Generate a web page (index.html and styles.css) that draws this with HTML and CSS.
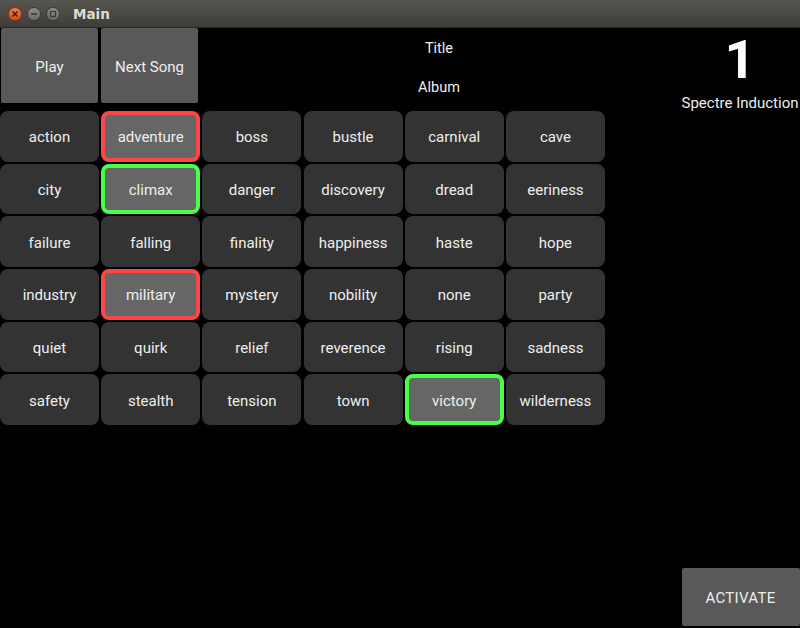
FILE: index.html
```html
<!DOCTYPE html>
<html>
<head>
<meta charset="utf-8">
<link rel="stylesheet" href="styles.css">
</head>
<body>
<div class="window">
  <div class="titlebar">
    <div class="wbtns">
      <span class="wb close"><svg width="10" height="10" viewBox="0 0 10 10"><path d="M2.5 2.5L7.5 7.5M7.5 2.5L2.5 7.5" stroke="#3a1a10" stroke-width="1.4"/></svg></span>
      <span class="wb"><svg width="10" height="10" viewBox="0 0 10 10"><path d="M2 5H8" stroke="#3c3b37" stroke-width="1.6"/></svg></span>
      <span class="wb"><svg width="10" height="10" viewBox="0 0 10 10"><rect x="2.5" y="2.5" width="5" height="5" fill="none" stroke="#3c3b37" stroke-width="1.3"/></svg></span>
    </div>
    <span class="wtitle">Main</span>
  </div>
  <div class="app">
    <div class="left">
      <div class="top">
        <button class="btn">Play</button>
        <button class="btn">Next Song</button>
        <div class="info">
          <div class="info-line">Title</div>
          <div class="info-line">Album</div>
        </div>
      </div>
      <div class="grid">
        <div class="cell">action</div>
        <div class="cell sel red">adventure</div>
        <div class="cell">boss</div>
        <div class="cell">bustle</div>
        <div class="cell">carnival</div>
        <div class="cell">cave</div>
        <div class="cell">city</div>
        <div class="cell sel green">climax</div>
        <div class="cell">danger</div>
        <div class="cell">discovery</div>
        <div class="cell">dread</div>
        <div class="cell">eeriness</div>
        <div class="cell">failure</div>
        <div class="cell">falling</div>
        <div class="cell">finality</div>
        <div class="cell">happiness</div>
        <div class="cell">haste</div>
        <div class="cell">hope</div>
        <div class="cell">industry</div>
        <div class="cell sel red">military</div>
        <div class="cell">mystery</div>
        <div class="cell">nobility</div>
        <div class="cell">none</div>
        <div class="cell">party</div>
        <div class="cell">quiet</div>
        <div class="cell">quirk</div>
        <div class="cell">relief</div>
        <div class="cell">reverence</div>
        <div class="cell">rising</div>
        <div class="cell">sadness</div>
        <div class="cell">safety</div>
        <div class="cell">stealth</div>
        <div class="cell">tension</div>
        <div class="cell">town</div>
        <div class="cell sel green">victory</div>
        <div class="cell">wilderness</div>
      </div>
    </div>
    <div class="right">
      <div class="count">1</div>
      <div class="name">Spectre Induction</div>
      <div class="spacer"></div>
      <button class="btn activate">ACTIVATE</button>
    </div>
  </div>
</div>
</body>
</html>
```

FILE: styles.css
```css
html, body {
  margin: 0;
  padding: 0;
  background: #000;
}
body {
  width: 800px;
  height: 628px;
  overflow: hidden;
  font-family: Roboto, "Liberation Sans", sans-serif;
  color: #eeeeee;
}
.window {
  display: flex;
  flex-direction: column;
  height: 628px;
}
.titlebar {
  height: 27px;
  border-bottom: 1px solid #2b2a27;
  background: linear-gradient(#57564f, #3d3c38);
  display: flex;
  align-items: center;
  box-sizing: content-box;
}
.wbtns {
  display: flex;
  gap: 5px;
  padding-left: 8px;
}
.wb {
  width: 14px;
  height: 14px;
  border-radius: 50%;
  background: linear-gradient(#8f8d87, #6d6b66);
  border: 1px solid #3a3935;
  display: flex;
  align-items: center;
  justify-content: center;
  box-sizing: border-box;
}
.wb.close {
  background: linear-gradient(#f07a50, #dc4c20);
  border-color: #8a3416;
}
.wtitle {
  margin-left: 13px;
  font-family: "DejaVu Sans", sans-serif;
  font-weight: bold;
  font-size: 13.5px;
  color: #dfdbd2;
}
.app {
  flex: 1;
  display: flex;
}
.left {
  width: 680px;
  display: flex;
  flex-direction: column;
}
.top {
  height: 83px;
  display: flex;
  align-items: flex-start;
}
.btn {
  font-family: Roboto, "Liberation Sans", sans-serif;
  font-size: 15px;
  color: #eeeeee;
  background: #595959;
  border: none;
  border-radius: 2px;
  padding: 2px 0 0 0;
}
.top .btn {
  width: 97px;
  height: 75px;
  margin-left: 1px;
  margin-right: 3px;
}
.top .btn + .btn {
  margin-left: 0;
  margin-right: 0;
}
.info {
  flex: 1;
  display: flex;
  flex-direction: column;
  align-items: center;
  padding-top: 12px;
  gap: 21px;
}
.info-line {
  font-size: 14.5px;
  line-height: 18px;
}
.grid {
  width: 605px;
  display: grid;
  grid-template-columns: repeat(6, 99px);
  grid-template-rows: repeat(6, 50.5px);
  column-gap: 2.2px;
  row-gap: 2.2px;
}
.cell {
  background: #333333;
  border-radius: 8px;
  display: flex;
  align-items: center;
  justify-content: center;
  font-size: 15px;
  padding-top: 2px;
  box-sizing: border-box;
  color: #eeeeee;
}
.cell.sel {
  background: #666666;
  border: 4.5px solid;
  padding-top: 2px;
}
.cell.red { border-color: #ff4646; }
.cell.green { border-color: #46ff46; }
.right {
  width: 120px;
  display: flex;
  flex-direction: column;
  align-items: center;
}
.count {
  font-size: 54px;
  font-weight: bold;
  line-height: 60px;
  margin-top: 2px;
  color: #fff;
}
.name {
  font-size: 15px;
  margin-top: 4px;
  line-height: 18px;
  white-space: nowrap;
}
.spacer { flex: 1; }
.activate {
  width: 118px;
  height: 58px;
  margin-left: 1px;
  margin-bottom: 2px;
  letter-spacing: 0.3px;
}
```
